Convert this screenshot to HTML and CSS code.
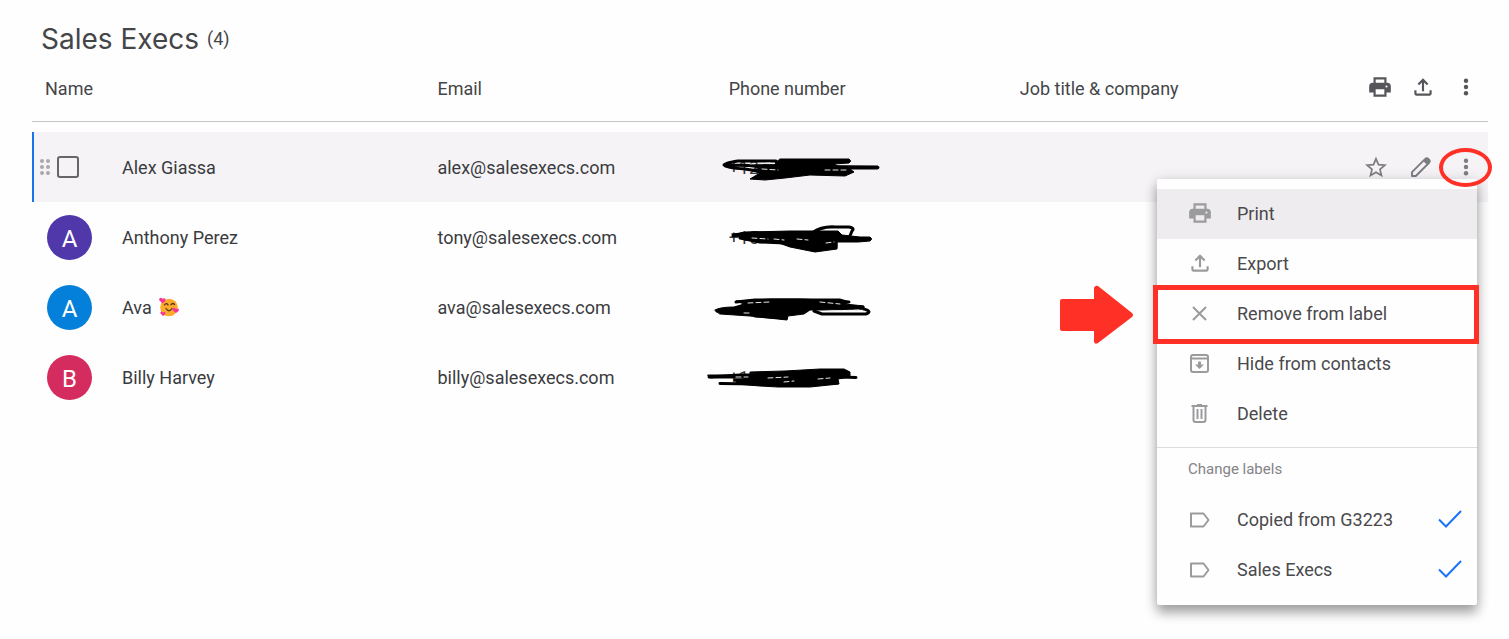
FILE: index.html
```html
<!DOCTYPE html>
<html lang="en">
<head>
    <meta charset="UTF-8">
    <meta name="viewport" content="width=device-width, initial-scale=1.0">
    <title>Sales Execs - Contacts</title>
    <link rel="stylesheet" href="styles.css">
</head>
<body>
    <!-- Shared icons -->
    <svg class="sprite" aria-hidden="true">
        <symbol id="icon-print" viewBox="0 0 24 24">
            <path fill-rule="evenodd" d="M6 3h12v5h1c1.700 0 3 1.300 3 3v6h-4v4H6v-4H2v-6c0-1.700 1.300-3 3-3h1zM8 5v3h8V5zM8 14v5h8v-5zM18 10.500a1 1 0 1 0 0 2 1 1 0 0 0 0-2z"/>
        </symbol>
        <symbol id="icon-export" viewBox="0 0 24 24">
            <path d="M12 4l5 5-1.400 1.400L13 7.800V16h-2V7.800l-2.600 2.600L7 9zM4 15h2v3h12v-3h2v3c0 1.100-.9 2-2 2H6c-1.100 0-2-.9-2-2z"/>
        </symbol>
        <symbol id="icon-more" viewBox="0 0 24 24">
            <circle cx="12" cy="5.800" r="2.200"/>
            <circle cx="12" cy="12" r="2.200"/>
            <circle cx="12" cy="18.200" r="2.200"/>
        </symbol>
        <symbol id="icon-label" viewBox="0 0 26 26">
            <path d="M4 7.500h12.500L21.500 14l-5 6.500H4z" fill="none" stroke="currentColor" stroke-width="2" stroke-linejoin="round"/>
        </symbol>
        <symbol id="icon-check" viewBox="0 0 26 26">
            <path d="M2 13.500l7 7L24 5" fill="none" stroke="currentColor" stroke-width="2"/>
        </symbol>
    </svg>

    <main class="contacts">
        <h1 class="title">Sales Execs <span class="count">(4)</span></h1>

        <table class="contact-table">
            <thead>
                <tr>
                    <th class="col-name">Name</th>
                    <th class="col-data">Email</th>
                    <th class="col-data">Phone number</th>
                    <th class="col-data">Job title &amp; company</th>
                    <th class="col-actions">
                        <div class="actions">
                            <button class="icon-button" aria-label="Print"><svg class="icon icon-lg"><use href="#icon-print"/></svg></button>
                            <button class="icon-button" aria-label="Export"><svg class="icon icon-lg"><use href="#icon-export"/></svg></button>
                            <button class="icon-button" aria-label="More actions"><svg class="icon icon-md"><use href="#icon-more"/></svg></button>
                        </div>
                    </th>
                </tr>
            </thead>
            <tbody>
                <tr class="active">
                    <td>
                        <div class="person">
                            <div class="select">
                                <svg class="drag" viewBox="0 0 12 18">
                                    <circle cx="3" cy="3" r="2"/><circle cx="9" cy="3" r="2"/>
                                    <circle cx="3" cy="9" r="2"/><circle cx="9" cy="9" r="2"/>
                                    <circle cx="3" cy="15" r="2"/><circle cx="9" cy="15" r="2"/>
                                </svg>
                                <input type="checkbox" class="checkbox" id="select-alex">
                            </div>
                            <label for="select-alex">Alex Giassa</label>
                        </div>
                    </td>
                    <td>alex@salesexecs.com</td>
                    <td class="phone">+12
                        <svg class="scribble" viewBox="0 0 200 70">
                            <path d="M76 29L38 29Q24 31 24 33Q26 36 45 37L70 41M24 33L178 35.500M76 30L149 29"/>
                            <path class="fill" d="M80 27H149Q152 29 149 31L134 32L138 34L178 34V37L150 37L154 40L145 44L110 43L85 46L65 48L50 47L60 41L50 38L62 36L45 34L74 33Z"/>
                            <path class="gap" d="M50 32L70 31M62 37L78 38M125 38L148 38"/>
                        </svg>
                    </td>
                    <td></td>
                    <td class="action-cell">
                        <div class="actions">
                            <button class="icon-button" aria-label="Star">
                                <svg class="icon icon-md" viewBox="0 0 24 24"><path fill="none" stroke="currentColor" stroke-width="1.700" d="M12 3.800l2.500 5.900 6.400.5-4.900 4.200 1.500 6.200-5.500-3.300-5.500 3.300L8 14.400l-4.900-4.200 6.400-.5z"/></svg>
                            </button>
                            <button class="icon-button" aria-label="Edit">
                                <svg class="icon icon-md" viewBox="0 0 24 24"><path fill="none" stroke="currentColor" stroke-width="1.900" stroke-linejoin="round" d="M3 21v-3.800L16.500 3.700q1.200-1 2.300 0l1.500 1.500q1 1.100 0 2.300L6.800 21z"/><path d="M14.200 6l3.800 3.800 2.900-2.900q1-1.200 0-2.300l-1.500-1.500q-1.200-1-2.300 0z"/></svg>
                            </button>
                            <button class="icon-button" aria-label="More actions" aria-expanded="true"><svg class="icon icon-md"><use href="#icon-more"/></svg></button>
                        </div>

                        <div class="menu">
                            <button class="menu-item hovered">
                                <svg class="icon icon-lg"><use href="#icon-print"/></svg>Print
                            </button>
                            <button class="menu-item">
                                <svg class="icon icon-lg"><use href="#icon-export"/></svg>Export
                            </button>
                            <button class="menu-item marked">
                                <svg class="icon icon-lg" viewBox="0 0 26 26"><path fill="none" stroke="currentColor" stroke-width="2" d="M6 7l13 13M19 7l-13 13"/></svg>Remove from label
                                <svg class="arrow" viewBox="0 0 74 60"><path d="M2 14H34V3Q35 0 38 1L72 28Q74 30 72 32L38 58Q35 60 34 57V46H2Q0 46 0 44V16Q0 14 2 14Z"/></svg>
                            </button>
                            <button class="menu-item">
                                <svg class="icon icon-lg" viewBox="0 0 26 26"><rect x="4" y="5" width="17" height="17" rx="2" fill="none" stroke="currentColor" stroke-width="2"/><path d="M4 7.500h17v2H4zM11 11.500h3v3h3l-4.500 4.500L8 14.500h3z"/></svg>Hide from contacts
                            </button>
                            <button class="menu-item">
                                <svg class="icon icon-lg" viewBox="0 0 26 26"><path fill="none" stroke="currentColor" stroke-width="2" d="M4.500 6h16M10 5h5M6.500 6v14q0 2 2 2h8q2 0 2-2V6M10.500 9v10M14.500 9v10"/></svg>Delete
                            </button>
                            <div class="menu-heading">Change labels</div>
                            <button class="menu-item">
                                <svg class="icon icon-lg"><use href="#icon-label"/></svg>Copied from G3223
                                <svg class="icon icon-lg check"><use href="#icon-check"/></svg>
                            </button>
                            <button class="menu-item">
                                <svg class="icon icon-lg"><use href="#icon-label"/></svg>Sales Execs
                                <svg class="icon icon-lg check"><use href="#icon-check"/></svg>
                            </button>
                        </div>
                        <div class="ring"></div>
                    </td>
                </tr>
                <tr>
                    <td><div class="person"><span class="avatar purple">A</span>Anthony Perez</div></td>
                    <td>tony@salesexecs.com</td>
                    <td class="phone">+15
                        <svg class="scribble" viewBox="0 0 200 70">
                            <path d="M33 34L45 31L112 31Q122 24 135 25L149 25Q155 26 152 29L149 36M40 36L60 40L85 41L115 48L136 45V40M60 34L170 37"/>
                            <path class="fill" d="M32 32L50 30L90 29H138L142 33L160 35H170Q173 37 170 39L158 40L137 40L137 47L115 50L90 45L76 40L45 38L39 35Z"/>
                            <path class="gap" d="M52 36L68 37M74 37L84 38M97 37L108 38M126 41L134 40"/>
                        </svg>
                    </td>
                    <td></td>
                    <td></td>
                </tr>
                <tr>
                    <td>
                        <div class="person">
                            <span class="avatar blue">A</span>Ava
                            <svg class="emoji" viewBox="0 0 20 20" role="img" aria-label="smiling face with hearts">
                                <circle cx="10" cy="10.500" r="8.800" fill="#fcab2a"/>
                                <path d="M5.500 8q1.500-2.500 3.500-.3M12 7.700q1.700-2.300 3.500-.2M7 11.500q3 4.500 6 0" fill="none" stroke="#5b3420" stroke-width="1.300" stroke-linecap="round"/>
                                <g fill="#f8339b">
                                    <path d="M3.500 6.500L.3 3.300Q-.3.500 2 .7L3.500 1.800Q6 .2 6.600 2.600 6.700 4 3.500 6.500z"/>
                                    <path d="M17 16L13.500 13Q13 10.300 15.500 10.800L17 12Q19.500 10.500 20 13q0 1-3 3z"/>
                                    <path d="M4 19L1.500 16.500Q1 14.300 3 14.600l1 .8q2-1.200 2.500.8 0 1-2.500 2.800z"/>
                                </g>
                            </svg>
                        </div>
                    </td>
                    <td>ava@salesexecs.com</td>
                    <td class="phone">
                        <svg class="scribble" viewBox="0 0 200 70">
                            <path d="M36 30L55 28L100 28L149 30M17 39L45 35L162 35M160 36Q174 39 166 42L122 42L114 39M55 44L85 46"/>
                            <path class="fill" d="M15 38Q20 35 34 35L44 32L36 29L70 27L140 27L150 30L145 32L164 34L164 37L120 38L110 38L104 42L88 44L87 48L50 44L20 42Z"/>
                            <path class="gap" d="M48 31L70 30M120 30L140 32M44 41L50 41M130 39L162 38"/>
                        </svg>
                    </td>
                    <td></td>
                    <td></td>
                </tr>
                <tr>
                    <td><div class="person"><span class="avatar pink">B</span>Billy Harvey</div></td>
                    <td>billy@salesexecs.com</td>
                    <td class="phone">+1
                        <svg class="scribble" viewBox="0 0 200 70">
                            <path d="M9 35L40 33L80 33L156 35.500M20 41.500L60 42L137 41M35 38L90 38L140 35"/>
                            <path class="fill" d="M8 33L50 33V30L85 29L120 27H144L150 30V35L138 37L139 42L110 45L78 45L60 44L36 42V38L50 36L10 36Z"/>
                            <path class="gap" d="M36 35L48 35M68 36L88 35M84 40L94 39M118 37L130 36"/>
                        </svg>
                    </td>
                    <td></td>
                    <td></td>
                </tr>
            </tbody>
        </table>
    </main>
</body>
</html>
```
FILE: styles.css
```css
* {
    box-sizing: border-box;
}

body {
    min-height: 100vh;
    margin: 0;
    background-color: #fefefe;
    color: #3a3b3e;
    font-family: Roboto, "Liberation Sans", sans-serif;
    font-size: 18px;
}

.sprite {
    position: absolute;
    width: 0;
    height: 0;
}

.contacts {
    padding: 16px 21px 0 32px;
}

.title {
    display: flex;
    align-items: center;
    gap: 8px;
    margin: 0;
    padding-left: 9px;
    color: #444548;
    font-family: Inter, sans-serif;
    font-size: 28px;
    font-weight: 400;
    line-height: 46px;
}

.count {
    font-family: Roboto, sans-serif;
    font-size: 18px;
}

/* Contact table */
.contact-table {
    width: 100%;
    table-layout: fixed;
    border-collapse: separate;
    border-spacing: 0;
}

.contact-table th {
    height: 60px;
    padding: 0 0 6px;
    border-bottom: 1px solid #c4c4c6;
    color: #444548;
    font-size: 18px;
    font-weight: 400;
    text-align: left;
}

.contact-table th.col-name {
    padding-left: 13px;
}

.col-data {
    width: 20%;
}

.contact-table th.col-actions {
    width: 177px;
    padding: 0 1px 10px 0;
}

.contact-table tbody::before {
    content: '';
    display: block;
    height: 10px;
}

.contact-table td {
    height: 70px;
    padding: 0;
}

.active td {
    background-color: #f5f3f6;
}

.active td:first-child {
    box-shadow: inset 2px 0 #1a73e8;
}

.person {
    display: flex;
    align-items: center;
    padding-left: 15px;
}

.avatar {
    width: 45px;
    height: 45px;
    margin-right: 30px;
    border-radius: 50%;
    color: white;
    font-size: 24px;
    line-height: 48px;
    text-align: center;
}

.purple {
    background-color: #5038aa;
}

.blue {
    background-color: #0480da;
}

.pink {
    background-color: #d42c5e;
}

.active .person {
    padding-left: 7px;
}

.select {
    display: flex;
    align-items: center;
    gap: 6px;
    width: 83px;
}

.drag {
    width: 12px;
    height: 18px;
    fill: #aaa8ac;
}

.checkbox {
    appearance: none;
    width: 22px;
    height: 22px;
    margin: 0;
    border: 2px solid #66656a;
    border-radius: 3px;
}

.emoji {
    width: 20px;
    height: 20px;
    margin-left: 7px;
}

/* Crossed-out phone numbers */
.phone {
    position: relative;
}

.scribble {
    position: absolute;
    top: 0;
    left: -29px;
    width: 200px;
    height: 70px;
    fill: none;
    stroke: black;
    stroke-width: 3;
    stroke-linecap: round;
    stroke-linejoin: round;
}

.scribble .fill {
    fill: black;
    stroke-width: 1;
}

.scribble .gap {
    stroke: #e8e8e8;
    stroke-width: 1;
    stroke-dasharray: 5 3;
}

/* Icon buttons */
.actions {
    display: flex;
    justify-content: flex-end;
}

.icon-button {
    display: flex;
    align-items: center;
    justify-content: center;
    width: 45px;
    height: 45px;
    padding: 0;
    border: none;
    background: none;
    color: #7d7c80;
    cursor: pointer;
}

th .icon-button {
    width: 43px;
    color: #56555a;
}

.icon {
    flex: none;
    fill: currentColor;
}

.icon-md {
    width: 24px;
    height: 24px;
}

.icon-lg {
    width: 26px;
    height: 26px;
}

/* Row menu */
.action-cell {
    position: relative;
}

.menu {
    position: absolute;
    top: 47px;
    right: 11px;
    width: 320px;
    padding: 10px 0;
    border-radius: 2px;
    background-color: #fefefe;
    box-shadow: 0 8px 12px rgba(0, 0, 0, 0.3), 0 2px 14px rgba(0, 0, 0, 0.16);
}

.menu-item {
    position: relative;
    display: flex;
    align-items: center;
    gap: 24px;
    width: 100%;
    height: 50px;
    padding: 0 14px 2px 30px;
    border: none;
    background: none;
    color: #4a494c;
    font-family: inherit;
    font-size: 18px;
    text-align: left;
    cursor: pointer;
}

.menu-item .icon {
    color: #9b9a9d;
}

.menu-item .check {
    margin-left: auto;
    color: #1a73f8;
}

.hovered {
    background-color: #eeecef;
}

.menu-heading {
    height: 48px;
    margin-top: 8px;
    padding-left: 31px;
    border-top: 1px solid #dcdcde;
    color: #848387;
    font-size: 15px;
    line-height: 42px;
}

/* Red callouts */
.marked::after {
    content: '';
    position: absolute;
    inset: -4px -2px -5px -4px;
    border: 5px solid #ff3025;
}

.arrow {
    position: absolute;
    top: -4px;
    left: -97px;
    width: 74px;
    height: 60px;
    fill: #ff3025;
}

.ring {
    position: absolute;
    top: 16px;
    right: -4px;
    width: 53px;
    height: 39px;
    border: 4px solid #ff3025;
    border-radius: 50%;
    pointer-events: none;
}
```
